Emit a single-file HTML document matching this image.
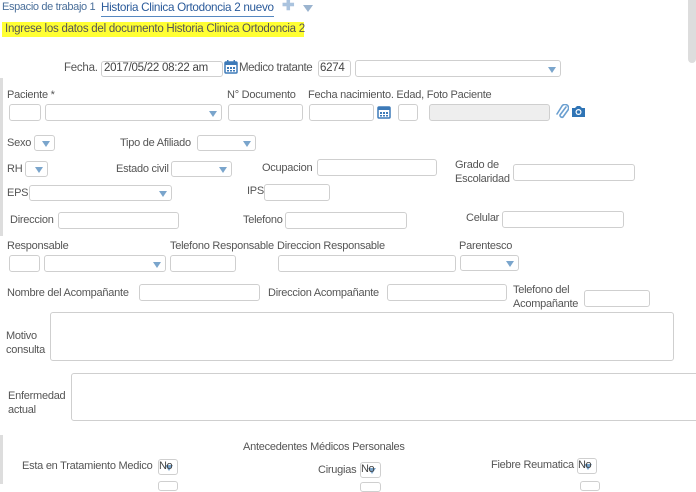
<!DOCTYPE html>
<html><head><meta charset="utf-8"><style>
*{margin:0;padding:0;box-sizing:border-box}
body{width:696px;height:484px;overflow:hidden;background:#fff;position:relative;font-family:"Liberation Sans",sans-serif;font-size:11px;letter-spacing:-0.25px;color:#555}
.l{position:absolute;white-space:nowrap;line-height:13px}
.i{position:absolute;border:1px solid #cfcfcf;border-radius:3px;background:#fff}
.s::after{content:"";position:absolute;right:4px;top:50%;margin-top:-2px;border-left:4px solid transparent;border-right:4px solid transparent;border-top:6px solid #7aa5cc}
.g{background:#eee}
</style></head><body>
<div style="position:absolute;left:688px;top:0;width:8px;height:63px;background:#ddd;border-radius:0 0 4px 4px"></div>
<div style="position:absolute;left:0;top:78px;width:3px;height:158px;background:#ddd"></div>
<div style="position:absolute;left:0;top:435px;width:3px;height:49px;background:#ddd"></div>

<div class="l" style="left:2px;top:1px;font-size:11px;letter-spacing:-0.35px;color:#4a6f9a">Espacio de trabajo 1</div>
<div class="l" style="left:101px;top:1px;font-size:11.7px;letter-spacing:-0.3px;color:#2a5a9a;border-bottom:1px solid #5588c0;padding-bottom:2px">Historia Clinica Ortodoncia 2 nuevo</div>
<div class="l" style="left:282px;top:-1px;font-size:15px;color:#aac3de;font-weight:bold">✚</div>
<div style="position:absolute;left:303px;top:5px;border-left:5px solid transparent;border-right:5px solid transparent;border-top:7px solid #9bb4cf"></div>
<div style="position:absolute;left:2px;top:22px;width:302px;height:15px;background:#ffff33"></div>
<div class="l" style="left:5px;top:23px;font-size:11.5px;letter-spacing:-0.25px;color:#555">Ingrese los datos del documento Historia Clinica Ortodoncia 2</div>

<div class="l" style="left:64px;top:62px;font-size:11.5px">Fecha.</div>
<div class="i" style="left:101px;top:61px;width:122px;height:16px"></div>
<div class="l" style="left:104px;top:62px;font-size:11.5px;color:#444">2017/05/22 08:22 am</div>
<svg style="position:absolute;left:224px;top:59px" width="14" height="15"><rect x="1" y="3" width="12" height="11" rx="1" fill="none" stroke="#3d7ab8" stroke-width="1.5"/><rect x="1" y="3" width="12" height="3" fill="#3d7ab8"/><g fill="#3d7ab8"><rect x="3" y="8" width="2" height="2"/><rect x="6" y="8" width="2" height="2"/><rect x="9" y="8" width="2" height="2"/><rect x="3" y="11" width="2" height="1.5"/><rect x="6" y="11" width="2" height="1.5"/><rect x="9" y="11" width="2" height="1.5"/><rect x="3" y="1" width="1.5" height="3"/><rect x="9.5" y="1" width="1.5" height="3"/></g></svg>
<div class="l" style="left:239px;top:62px;font-size:11.5px;letter-spacing:-0.4px">Medico tratante</div>
<div class="i" style="left:318px;top:60px;width:33px;height:17px"></div>
<div class="l" style="left:320px;top:62px;font-size:11.5px;color:#444">6274</div>
<div class="i s" style="left:355px;top:60px;width:206px;height:17px"></div>

<div class="l" style="left:7px;top:89px">Paciente *</div>
<div class="l" style="left:227px;top:89px">N° Documento</div>
<div class="l" style="left:308px;top:89px">Fecha nacimiento. Edad, Foto Paciente</div>
<div class="i" style="left:9px;top:104px;width:32px;height:17px"></div>
<div class="i s" style="left:45px;top:104px;width:177px;height:17px"></div>
<div class="i" style="left:228px;top:104px;width:75px;height:17px"></div>
<div class="i" style="left:309px;top:104px;width:65px;height:17px"></div>
<svg style="position:absolute;left:377px;top:104px" width="14" height="15"><rect x="1" y="3" width="12" height="11" rx="1" fill="none" stroke="#3d7ab8" stroke-width="1.5"/><rect x="1" y="3" width="12" height="3" fill="#3d7ab8"/><g fill="#3d7ab8"><rect x="3" y="8" width="2" height="2"/><rect x="6" y="8" width="2" height="2"/><rect x="9" y="8" width="2" height="2"/><rect x="3" y="11" width="2" height="1.5"/><rect x="6" y="11" width="2" height="1.5"/><rect x="9" y="11" width="2" height="1.5"/></g></svg>
<div class="i" style="left:398px;top:104px;width:20px;height:17px"></div>
<div class="i g" style="left:429px;top:104px;width:121px;height:17px"></div>
<svg style="position:absolute;left:556px;top:104px" width="13" height="16"><path d="M10 3 L4 11 A2 2 0 0 0 7 13 L12 6 A3.5 3.5 0 0 0 6 2 L1 10" fill="none" stroke="#6b9fd0" stroke-width="1.6" stroke-linecap="round"/></svg>
<svg style="position:absolute;left:571px;top:104px" width="15" height="14"><path d="M1 4h3l2-2h3l2 2h3v9H1z" fill="#2f74b5"/><circle cx="7.5" cy="8" r="3" fill="#fff"/><circle cx="7.5" cy="8" r="1.8" fill="#2f74b5"/></svg>

<div class="l" style="left:7px;top:137px">Sexo</div>
<div class="i s" style="left:34px;top:135px;width:21px;height:16px"></div>
<div class="l" style="left:120px;top:137px">Tipo de Afiliado</div>
<div class="i s" style="left:197px;top:135px;width:59px;height:16px"></div>

<div class="l" style="left:7px;top:163px">RH</div>
<div class="i s" style="left:25px;top:161px;width:23px;height:16px"></div>
<div class="l" style="left:116px;top:163px">Estado civil</div>
<div class="i s" style="left:171px;top:161px;width:61px;height:16px"></div>
<div class="l" style="left:262px;top:162px">Ocupacion</div>
<div class="i" style="left:317px;top:159px;width:120px;height:17px"></div>
<div class="l" style="left:455px;top:159px">Grado de</div>
<div class="l" style="left:455px;top:173px">Escolaridad</div>
<div class="i" style="left:513px;top:164px;width:122px;height:17px"></div>

<div class="l" style="left:7px;top:187px">EPS</div>
<div class="i s" style="left:29px;top:185px;width:143px;height:16px"></div>
<div class="l" style="left:247px;top:185px">IPS</div>
<div class="i" style="left:264px;top:184px;width:66px;height:17px"></div>

<div class="l" style="left:10px;top:214px">Direccion</div>
<div class="i" style="left:58px;top:212px;width:121px;height:17px"></div>
<div class="l" style="left:243px;top:214px">Telefono</div>
<div class="i" style="left:285px;top:212px;width:122px;height:17px"></div>
<div class="l" style="left:466px;top:212px">Celular</div>
<div class="i" style="left:502px;top:211px;width:122px;height:17px"></div>

<div class="l" style="left:7px;top:240px">Responsable</div>
<div class="l" style="left:170px;top:240px">Telefono Responsable</div>
<div class="l" style="left:277px;top:240px">Direccion Responsable</div>
<div class="l" style="left:459px;top:240px">Parentesco</div>
<div class="i" style="left:9px;top:255px;width:31px;height:17px"></div>
<div class="i s" style="left:44px;top:255px;width:122px;height:17px"></div>
<div class="i" style="left:170px;top:255px;width:66px;height:17px"></div>
<div class="i" style="left:278px;top:255px;width:178px;height:17px"></div>
<div class="i s" style="left:460px;top:255px;width:59px;height:16px"></div>

<div class="l" style="left:7px;top:287px">Nombre del Acompañante</div>
<div class="i" style="left:139px;top:284px;width:121px;height:17px"></div>
<div class="l" style="left:268px;top:287px">Direccion Acompañante</div>
<div class="i" style="left:387px;top:284px;width:120px;height:17px"></div>
<div class="l" style="left:513px;top:284px">Telefono del</div>
<div class="l" style="left:513px;top:298px">Acompañante</div>
<div class="i" style="left:584px;top:290px;width:66px;height:17px"></div>

<div class="l" style="left:6px;top:330px">Motivo</div>
<div class="l" style="left:6px;top:344px">consulta</div>
<div class="i" style="left:50px;top:312px;width:624px;height:49px"></div>

<div class="l" style="left:8px;top:390px">Enfermedad</div>
<div class="l" style="left:8px;top:404px">actual</div>
<div class="i" style="left:71px;top:373px;width:640px;height:48px"></div>

<div class="l" style="left:243px;top:441px">Antecedentes Médicos Personales</div>
<div class="l" style="left:22px;top:460px">Esta en Tratamiento Medico</div>
<div class="i s" style="left:158px;top:459px;width:20px;height:16px"></div>
<div class="l" style="left:159px;top:460px;color:#444;letter-spacing:-0.5px">No</div>
<div class="l" style="left:318px;top:464px">Cirugias</div>
<div class="i s" style="left:360px;top:462px;width:21px;height:16px"></div>
<div class="l" style="left:361px;top:463px;color:#444;letter-spacing:-0.5px">No</div>
<div class="l" style="left:491px;top:459px">Fiebre Reumatica</div>
<div class="i s" style="left:577px;top:458px;width:20px;height:16px"></div>
<div class="l" style="left:578px;top:459px;color:#444;letter-spacing:-0.5px">No</div>
<div class="i" style="left:158px;top:481px;width:20px;height:10px"></div>
<div class="i" style="left:360px;top:482px;width:21px;height:10px"></div>
<div class="i" style="left:580px;top:481px;width:20px;height:10px"></div>
</body></html>
